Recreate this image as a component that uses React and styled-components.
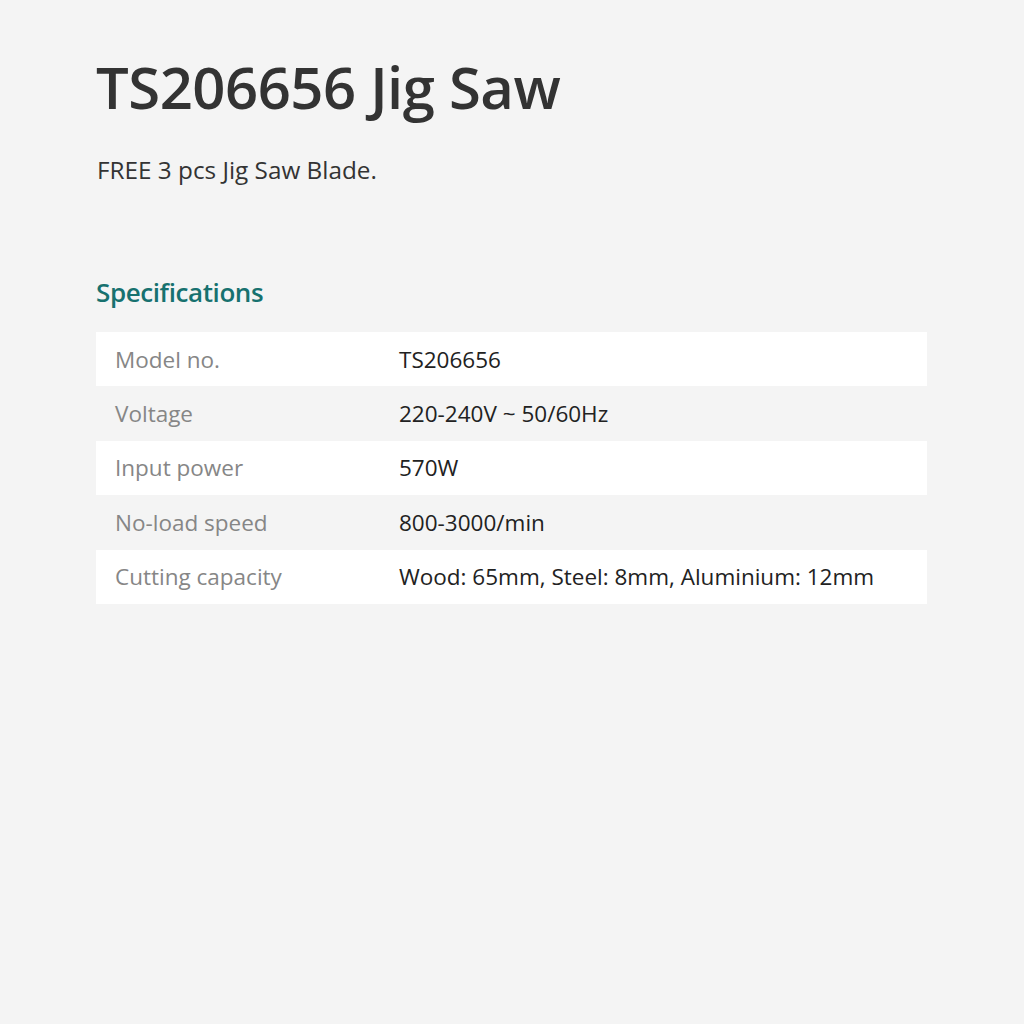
import React from "react";
import styled, { createGlobalStyle } from "styled-components";

const GlobalStyle = createGlobalStyle`
  html, body {
    margin: 0;
    padding: 0;
    background: #f4f4f4;
  }
  body {
    font-family: "Open Sans", "Noto Sans", sans-serif;
    color: #333;
  }
`;

const Page = styled.div`
  min-height: 1024px;
  padding: 49px 97px 0 96px;
  box-sizing: border-box;
`;

const Title = styled.h1`
  margin: 0;
  font-size: 58px;
  font-weight: 600;
  line-height: 76px;
  letter-spacing: -0.5px;
  color: #333;
`;

const Lead = styled.p`
  margin: 29px 0 0 1px;
  font-size: 24.3px;
  line-height: 32px;
  color: #333;
`;

const SectionTitle = styled.h2`
  margin: 88px 0 0 0;
  font-size: 26px;
  font-weight: 600;
  line-height: 36px;
  letter-spacing: -0.4px;
  color: #17716f;
`;

const SpecTable = styled.div`
  margin-top: 22px;
  width: 831px;
  display: flex;
  flex-direction: column;
`;

const Row = styled.div`
  display: grid;
  grid-template-columns: 284px 1fr;
  align-items: center;
  height: 54.4px;
  padding-left: 19px;
  background: ${(p) => (p.$striped ? "#ffffff" : "transparent")};
  font-size: 22.5px;
`;

const Label = styled.span`
  color: #868686;
`;

const Value = styled.span`
  color: #222;
`;

const specs = [
  ["Model no.", "TS206656"],
  ["Voltage", "220-240V ~ 50/60Hz"],
  ["Input power", "570W"],
  ["No-load speed", "800-3000/min"],
  ["Cutting capacity", "Wood: 65mm, Steel: 8mm, Aluminium: 12mm"],
];

export default function App() {
  return (
    <>
      <GlobalStyle />
      <Page>
        <Title>TS206656 Jig Saw</Title>
        <Lead>FREE 3 pcs Jig Saw Blade.</Lead>
        <SectionTitle>Specifications</SectionTitle>
        <SpecTable>
          {specs.map(([label, value], i) => (
            <Row key={label} $striped={i % 2 === 0}>
              <Label>{label}</Label>
              <Value>{value}</Value>
            </Row>
          ))}
        </SpecTable>
      </Page>
    </>
  );
}
